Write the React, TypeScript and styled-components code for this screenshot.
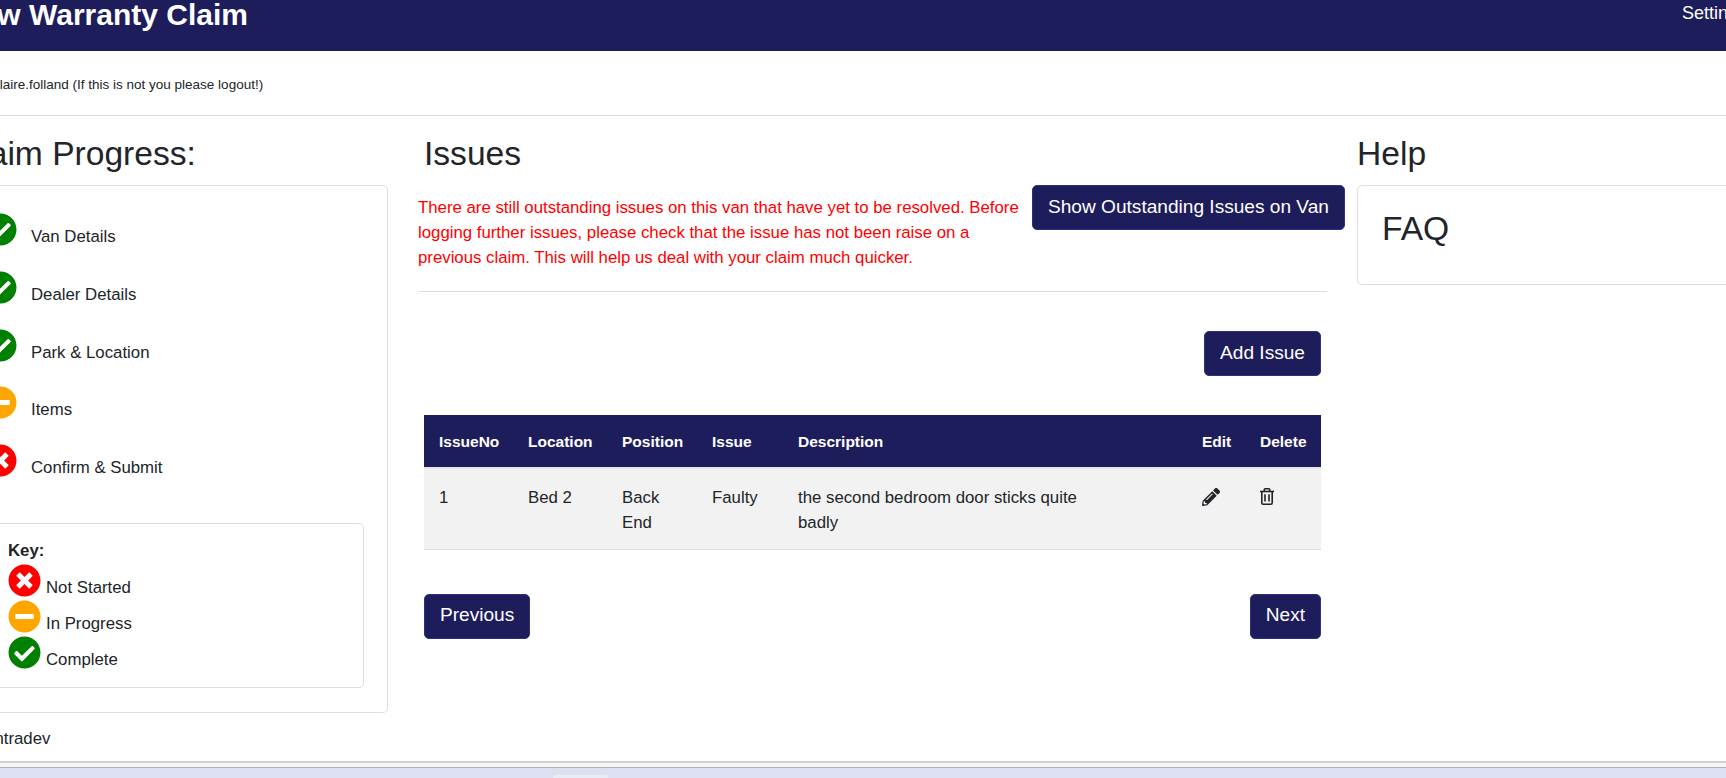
import { createGlobalStyle } from 'styled-components';
import styled from 'styled-components';
import { FaCheckCircle, FaMinusCircle, FaTimesCircle, FaPencilAlt } from 'react-icons/fa';

const NAVY = '#1e1d5b';
const LINE = '#dfdfdf';

const GlobalStyle = createGlobalStyle`
  html, body {
    margin: 0;
    height: 100%;
    overflow: hidden;
    background: #fff;
  }
  body {
    font-family: "Liberation Sans", Arial, sans-serif;
    font-size: 16.8px;
    line-height: 1.5;
    color: #212529;
  }
`;

const Screen = styled.div`
  height: 778px;
  display: flex;
  flex-direction: column;
  overflow: hidden;
`;

const Viewport = styled.div`
  height: 761px;
  flex-shrink: 0;
  overflow: hidden;
`;

/* the page in the shot is scrolled right and down a little */
const ScrolledPage = styled.div`
  width: 1860px;
  margin: -11px 0 0 -48px;
`;

const Header = styled.header`
  height: 62px;
  background: ${NAVY};
  color: #fff;
  display: flex;
  justify-content: space-between;
  align-items: flex-start;
  padding-left: 7px;
  box-sizing: border-box;
`;

const Title = styled.h1`
  margin: 0;
  font-size: 30px;
  line-height: 52px;
  font-weight: 700;
`;

const SettingsLink = styled.a`
  font-size: 18px;
  line-height: 49px;
  color: #fff;
  margin-right: 65px;
`;

const UserBar = styled.div`
  height: 60px;
  padding: 4px 0 0 5px;
  display: flex;
  align-items: center;
  font-size: 13.5px;
  border-bottom: 1px solid ${LINE};
`;

const Columns = styled.div`
  display: flex;
  align-items: flex-start;
  gap: 30px;
`;

const Sidebar = styled.aside`
  width: 436px;
  flex-shrink: 0;
`;

const Main = styled.main`
  width: 909px;
  flex-shrink: 0;
`;

const HelpColumn = styled.aside`
  width: 420px;
  flex-shrink: 0;
`;

const Heading = styled.h2<{ $indent?: number }>`
  margin: 0;
  height: 69px;
  padding-left: ${(props) => props.$indent ?? 0}px;
  font-size: 33.6px;
  font-weight: 400;
  line-height: 75px;
`;

const Card = styled.div`
  border: 1px solid ${LINE};
  border-radius: 5px;
  box-sizing: border-box;
`;

const ProgressCard = styled(Card)`
  height: 528px;
  padding: 27px 23px 0 31px;
`;

const StepList = styled.ul`
  list-style: none;
  margin: 0;
  padding: 0;
  display: flex;
  flex-direction: column;
  gap: 24.8px;
`;

const Step = styled.li`
  display: flex;
  align-items: center;
  gap: 14px;
  height: 33px;
`;

const StepLabel = styled.span`
  position: relative;
  top: 7px;
`;

const KeyBox = styled(Card)`
  height: 165px;
  margin-top: 46px;
  margin-left: -17px;
  padding: 14px 0 0 40px;
  width: calc(100% + 17px);
`;

const KeyTitle = styled.div`
  font-weight: 700;
  line-height: 26px;
`;

const KeyRow = styled.div`
  display: flex;
  height: 36px;
  gap: 5px;
`;

const KeyLabel = styled.span`
  padding-top: 11px;
`;

const Footnote = styled.div`
  padding: 13px 0 0 21px;
`;

const Warning = styled.div`
  display: flex;
  align-items: flex-start;
  height: 106px;
  border-bottom: 1px solid ${LINE};
`;

const WarningText = styled.p`
  margin: 10px 0 0;
  width: 605px;
  flex-shrink: 0;
  color: #ff0000;
  line-height: 25px;
`;

const NavyButton = styled.button`
  height: 45px;
  padding: 0 15px 2px;
  font-family: inherit;
  font-size: 19.1px;
  line-height: 1;
  color: #fff;
  background: ${NAVY};
  border: 1px solid #2f3080;
  border-radius: 5px;
  cursor: pointer;
  white-space: nowrap;
`;

const ShowButton = styled(NavyButton)`
  margin-left: 9px;
  flex-shrink: 0;
`;

const Inner = styled.div`
  padding: 0 6px;
`;

const AddRow = styled.div`
  display: flex;
  justify-content: flex-end;
  padding-top: 39px;
`;

const IssueTable = styled.table`
  width: 897px;
  margin-top: 39px;
  border-collapse: collapse;
  table-layout: fixed;
`;

const HeadCell = styled.th`
  height: 50px;
  padding: 2px 0 0 15px;
  background: ${NAVY};
  color: #fff;
  font-weight: 700;
  font-size: 15.5px;
  text-align: left;
  border-bottom: 2px solid #e6e6e6;
`;

const Row = styled.tr`
  background: #f2f2f2;
`;

const BodyCell = styled.td`
  height: 81px;
  padding: 17px 12px 0 15px;
  vertical-align: top;
  line-height: 24.5px;
  border-bottom: 1px solid ${LINE};
  box-sizing: border-box;
`;

const Description = styled.div`
  max-width: 300px;
`;

const PagerRow = styled.div`
  display: flex;
  justify-content: space-between;
  padding-top: 44px;
`;

const FaqCard = styled(Card)`
  height: 100px;
  width: 440px;
  padding: 19px 0 0 24px;
`;

const FaqTitle = styled.h3`
  margin: 0;
  font-size: 33.6px;
  font-weight: 400;
  line-height: 48px;
`;

const IconBox = styled.span<{ $color: string }>`
  display: inline-flex;
  flex-shrink: 0;
  color: ${(props) => props.$color};
`;

const ActionIcon = styled.span`
  display: inline-flex;
  padding-top: 2px;
  color: #212529;
`;

const TrashSvg = styled.svg`
  margin-left: -1px;
  fill: none;
  stroke: currentColor;
  stroke-width: 1.6;
`;

const ChromeLine = styled.div`
  height: 2px;
  flex-shrink: 0;
  background: #d0d0d0;
`;

const ChromeGap = styled.div`
  height: 4px;
  flex-shrink: 0;
  background: #f6f6f6;
`;

const Taskbar = styled.div`
  flex: 1;
  min-height: 0;
  border-top: 1px solid #aeb0ba;
  background: #dce0f0;
  padding: 7px 0 0 553px;
`;

const TaskTab = styled.div`
  width: 55px;
  height: 3px;
  background: #e9ebf6;
  border-radius: 3px 3px 0 0;
`;

type Status = 'done' | 'progress' | 'todo';

const statusIcon = (status: Status) => {
  if (status === 'done') {
    return (
      <IconBox $color="#008000">
        <FaCheckCircle size={33} />
      </IconBox>
    );
  }
  if (status === 'progress') {
    return (
      <IconBox $color="#ffa500">
        <FaMinusCircle size={33} />
      </IconBox>
    );
  }
  return (
    <IconBox $color="#ff0000">
      <FaTimesCircle size={33} />
    </IconBox>
  );
};

const TrashIcon = () => (
  <TrashSvg width="16" height="17" viewBox="0 0 16 17">
    <path d="M5.3 3.2V1.6c0-.4.3-.8.8-.8h3.8c.5 0 .8.4.8.8v1.6" />
    <path d="M1 3.5h14" />
    <path d="M2.8 3.5v11.3c0 .9.6 1.4 1.3 1.4h7.8c.7 0 1.3-.5 1.3-1.4V3.5" />
    <path d="M6 6.3v7.2M10 6.3v7.2" />
  </TrashSvg>
);

const steps: { label: string; status: Status }[] = [
  { label: 'Van Details', status: 'done' },
  { label: 'Dealer Details', status: 'done' },
  { label: 'Park & Location', status: 'done' },
  { label: 'Items', status: 'progress' },
  { label: 'Confirm & Submit', status: 'todo' },
];

const keyRows: { label: string; status: Status }[] = [
  { label: 'Not Started', status: 'todo' },
  { label: 'In Progress', status: 'progress' },
  { label: 'Complete', status: 'done' },
];

export default function App() {
  return (
    <Screen>
      <GlobalStyle />
      <Viewport>
        <ScrolledPage>
          <Header>
            <Title>New Warranty Claim</Title>
            <SettingsLink>Settings</SettingsLink>
          </Header>
          <UserBar>User: claire.folland (If this is not you please logout!)</UserBar>
          <Columns>
            <Sidebar>
              <Heading $indent={5}>Claim Progress:</Heading>
              <ProgressCard>
                <StepList>
                  {steps.map((step) => (
                    <Step key={step.label}>
                      {statusIcon(step.status)}
                      <StepLabel>{step.label}</StepLabel>
                    </Step>
                  ))}
                </StepList>
                <KeyBox>
                  <KeyTitle>Key:</KeyTitle>
                  {keyRows.map((row) => (
                    <KeyRow key={row.label}>
                      {statusIcon(row.status)}
                      <KeyLabel>{row.label}</KeyLabel>
                    </KeyRow>
                  ))}
                </KeyBox>
              </ProgressCard>
              <Footnote>Contradev</Footnote>
            </Sidebar>
            <Main>
              <Heading $indent={6}>Issues</Heading>
              <Warning>
                <WarningText>
                  There are still outstanding issues on this van that have yet to be resolved. Before
                  logging further issues, please check that the issue has not been raise on a
                  previous claim. This will help us deal with your claim much quicker.
                </WarningText>
                <ShowButton>Show Outstanding Issues on Van</ShowButton>
              </Warning>
              <Inner>
                <AddRow>
                  <NavyButton>Add Issue</NavyButton>
                </AddRow>
                <IssueTable>
                  <colgroup>
                    <col width={89} />
                    <col width={94} />
                    <col width={90} />
                    <col width={86} />
                    <col width={404} />
                    <col width={58} />
                    <col width={76} />
                  </colgroup>
                  <thead>
                    <tr>
                      <HeadCell>IssueNo</HeadCell>
                      <HeadCell>Location</HeadCell>
                      <HeadCell>Position</HeadCell>
                      <HeadCell>Issue</HeadCell>
                      <HeadCell>Description</HeadCell>
                      <HeadCell>Edit</HeadCell>
                      <HeadCell>Delete</HeadCell>
                    </tr>
                  </thead>
                  <tbody>
                    <Row>
                      <BodyCell>1</BodyCell>
                      <BodyCell>Bed 2</BodyCell>
                      <BodyCell>Back End</BodyCell>
                      <BodyCell>Faulty</BodyCell>
                      <BodyCell>
                        <Description>the second bedroom door sticks quite badly</Description>
                      </BodyCell>
                      <BodyCell>
                        <ActionIcon>
                          <FaPencilAlt size={18} />
                        </ActionIcon>
                      </BodyCell>
                      <BodyCell>
                        <ActionIcon>
                          <TrashIcon />
                        </ActionIcon>
                      </BodyCell>
                    </Row>
                  </tbody>
                </IssueTable>
                <PagerRow>
                  <NavyButton>Previous</NavyButton>
                  <NavyButton>Next</NavyButton>
                </PagerRow>
              </Inner>
            </Main>
            <HelpColumn>
              <Heading>Help</Heading>
              <FaqCard>
                <FaqTitle>FAQ</FaqTitle>
              </FaqCard>
            </HelpColumn>
          </Columns>
        </ScrolledPage>
      </Viewport>
      <ChromeLine />
      <ChromeGap />
      <Taskbar>
        <TaskTab />
      </Taskbar>
    </Screen>
  );
}
